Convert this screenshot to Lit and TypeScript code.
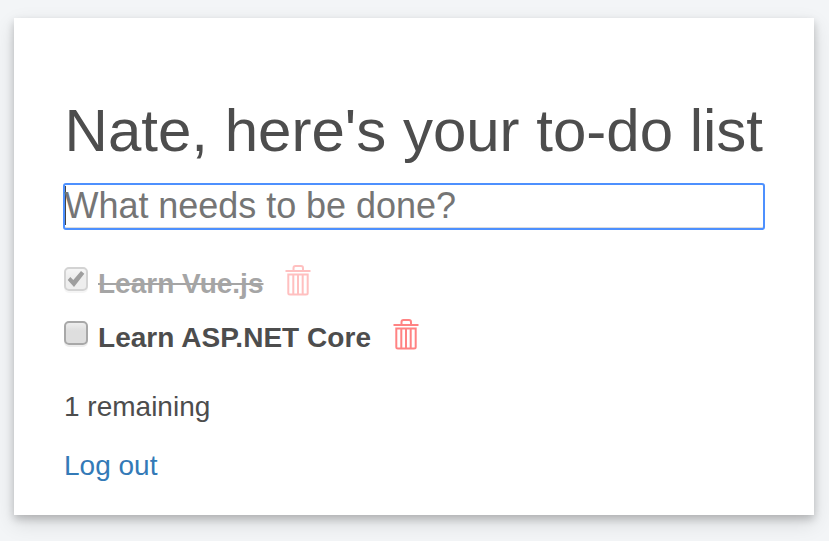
import { LitElement, html, css, svg } from "lit";
import { customElement, property } from "lit/decorators.js";

@customElement("todo-item")
class TodoItem extends LitElement {
  @property() label = "";
  @property({ type: Boolean, reflect: true }) done = false;

  static styles = css`
    :host { display: flex; height: 54px; align-items: flex-start; }
    :host([done]) { opacity: 0.5; }
    .box { flex: none; width: 24px; height: 27px; margin: 11px 10px 0 0; }
    .label { font-weight: 700; line-height: 56px; letter-spacing: 0.04px; white-space: nowrap; }
    :host([done]) .label { letter-spacing: 0; text-decoration: line-through; }
    .trash { flex: none; width: 26px; height: 31px; margin: 9px 0 0 22px; }
  `;

  render() {
    return html`
      <svg class="box" viewBox="0 0 24 27">
        <defs>
          <linearGradient id="face" x1="0" y1="0" x2="0" y2="1">
            <stop offset="0" stop-color="#f0f0f0" />
            <stop offset="0.4" stop-color="#dedede" />
            <stop offset="1" stop-color="#dedede" />
          </linearGradient>
        </defs>
        <rect x="1" y="3" width="22" height="22" rx="4" fill="none" stroke="#ededed" stroke-width="2" />
        <rect x="1" y="1" width="22" height="22" rx="4" fill="url(#face)" stroke="#a8a8a8" stroke-width="2" />
        ${this.done ? svg`<path d="M3.7 13 L6.3 10 L9.3 13 L17 4 L20.3 6.7 L10 20 Z" fill="#404040" />` : ""}
      </svg>
      <span class="label">${this.label}</span>
      <svg class="trash" viewBox="0 0 26 31" fill="none" stroke="#ff8383" stroke-width="2">
        <path d="M0.5 6 H25.5 M8.5 5 V3 Q8.5 1 10.5 1 H16 Q18 1 18 3 V5" />
        <path d="M3.3 9.5 H22.7 V28 Q22.7 29.5 21 29.5 H5 Q3.3 29.5 3.3 28 Z M8.3 10 V29 M13 10 V29 M17.7 10 V29" />
      </svg>
    `;
  }
}

@customElement("app-root")
class AppRoot extends LitElement {
  static styles = css`
    :host {
      display: flow-root; height: 541px; overflow: hidden; background: #f3f5f7;
      color: #4d4d4d; font: 28px/40px "Liberation Sans", Arial, sans-serif;
    }
    .card {
      box-sizing: border-box; width: 800px; height: 497px; margin: 18px 0 0 14px;
      padding: 80px 50px 0; background: #fff;
      box-shadow: 0 4px 8px rgba(0, 0, 0, 0.2), 0 8px 20px rgba(0, 0, 0, 0.12);
    }
    h1 { margin: 0; padding-left: 0.6px; font-size: 60px; line-height: 66px; font-weight: 400; white-space: nowrap; }
    .field {
      box-sizing: border-box; display: flex; width: 702px; height: 47px; margin: 19px -1px 26px;
      border: 2px solid #4d90fe; border-radius: 3px; box-shadow: inset 0 -1px 0 #dcdcdc;
      font-size: 36px; line-height: 41px; letter-spacing: -0.04px; color: #757575;
    }
    .caret { width: 1px; height: 39px; margin: 1px -1.5px 0 0; background: #444; }
    .remaining { margin: 23px 0 19px; }
    a { color: #337ab7; text-decoration: none; }
  `;

  render() {
    return html`
      <main class="card">
        <h1>Nate, here's your to-do list</h1>
        <div class="field"><span class="caret"></span><span>What needs to be done?</span></div>
        <todo-item label="Learn Vue.js" done></todo-item>
        <todo-item label="Learn ASP.NET Core"></todo-item>
        <p class="remaining">1 remaining</p>
        <a>Log out</a>
      </main>
    `;
  }
}
